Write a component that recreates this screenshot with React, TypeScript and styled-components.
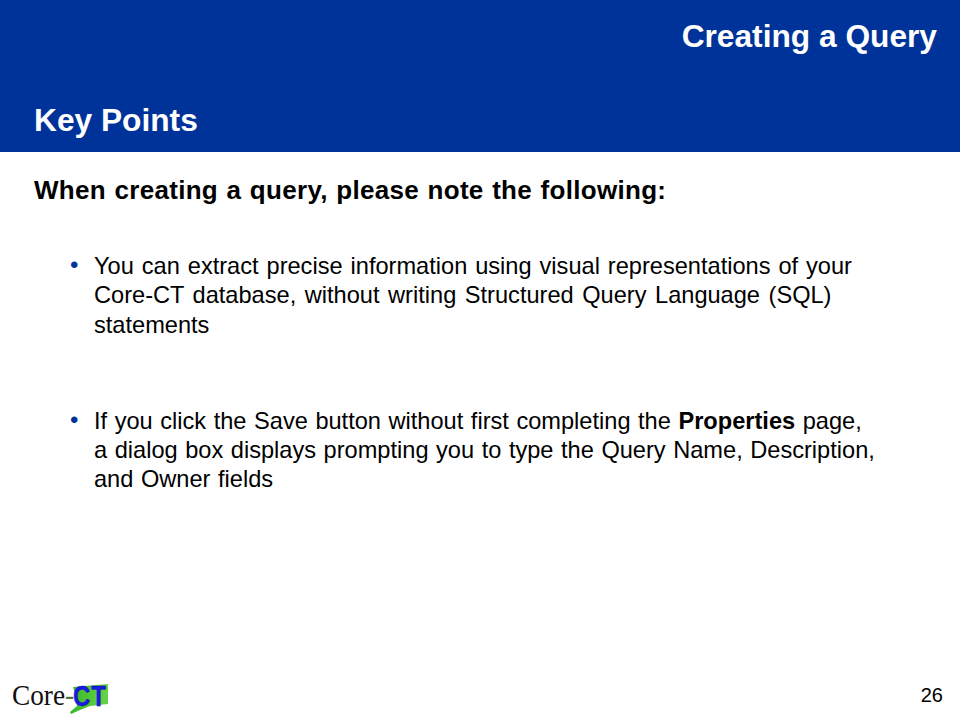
import React from "react";
import styled, { createGlobalStyle } from "styled-components";

const Global = createGlobalStyle`
  html, body { margin: 0; padding: 0; background: #fff; }
  body { font-family: "Liberation Sans", Arial, sans-serif; }
`;
const Slide = styled.div`
  width: 960px; height: 720px; display: flex; flex-direction: column; overflow: hidden; background: #fff; color: #000;
`;
const Banner = styled.header`
  height: 152px; background: #003399; color: #fff; display: flex; flex-direction: column; font-weight: 700; box-sizing: border-box; padding: 18px 23px 14px 34px;
`;
const Chapter = styled.div`
  font-size: 31.7px; line-height: 36px; text-align: right;
`;
const Section = styled.div`
  margin-top: auto; font-size: 31.7px; line-height: 36px;
`;
const Body = styled.main`
  flex: 1; padding: 23px 50px 0 34px; display: flex; flex-direction: column;
`;
const Lead = styled.div`
  font-size: 26px; line-height: 30px; font-weight: 700; letter-spacing: 0.3px; word-spacing: 1px;
`;
const Item = styled.div<{ $gap: number }>`
  margin-top: ${p => p.$gap}px; display: flex; font-size: 23.6px; line-height: 29.3px;
`;
const Dot = styled.span`
  width: 60px; flex: none; padding-left: 36px; box-sizing: border-box; color: #003399; font-size: 24px; line-height: 26px;
`;
const Lines = styled.div`
  display: flex; flex-direction: column;
`;
const Line = styled.span<{ $ws?: number }>`
  white-space: nowrap; word-spacing: ${p => p.$ws ?? 0}px;
`;
const Footer = styled.footer`
  height: 58px; box-sizing: border-box; display: flex; justify-content: space-between; align-items: flex-start; padding: 18px 17px 0 10px;
`;
const Page = styled.span`
  font-size: 20px; line-height: 22px; margin-top: 4px;
`;
const LogoBox = styled.div`
  position: relative; width: 102px; height: 40px;
`;
const LogoArt = styled.svg`
  position: absolute; left: 0; top: 0;
`;
const LogoWord = styled.span`
  position: absolute; left: 2px; top: 0; font-family: "Liberation Serif", "Times New Roman", serif; font-size: 30px; line-height: 30px; color: #111; transform: scaleX(0.91); transform-origin: left top; white-space: nowrap;
`;
const LogoDash = styled.span`
  color: #4f6f45;
`;
const LogoMark = styled.span`
  position: absolute; left: 63px; top: 1px; font-family: "Liberation Sans", Arial, sans-serif; font-weight: 700; font-size: 30px; line-height: 30px; letter-spacing: 1px; color: #1a1ae6; -webkit-text-stroke: 0.4px #0b0b90; transform: scaleX(0.8); transform-origin: left top; white-space: nowrap;
`;
const Logo = () => (
  <LogoBox>
    <LogoArt width="102" height="40" viewBox="0 0 102 40">
      <defs>
        <linearGradient id="logoGreen" x1="0" x2="1" y1="0" y2="0">
          <stop offset="0" stopColor="#38b828" />
          <stop offset="1" stopColor="#68d34a" />
        </linearGradient>
      </defs>
      <path d="M63 7 L98 4 L98 24 L80 26 L70 30 L61 34 L60 32 L67 26 L66 17 Z" fill="url(#logoGreen)" />
    </LogoArt>
    <LogoWord>Core<LogoDash>-</LogoDash></LogoWord>
    <LogoMark>CT</LogoMark>
  </LogoBox>
);
export default function App() {
  return (
    <Slide>
      <Global />
      <Banner>
        <Chapter>Creating a Query</Chapter>
        <Section>Key Points</Section>
      </Banner>
      <Body>
        <Lead>When creating a query, please note the following:</Lead>
        <Item $gap={47}>
          <Dot>•</Dot>
          <Lines>
            <Line $ws={1.4}>You can extract precise information using visual representations of your</Line>
            <Line $ws={2}>Core-CT database, without writing Structured Query Language (SQL)</Line>
            <Line>statements</Line>
          </Lines>
        </Item>
        <Item $gap={67}>
          <Dot>•</Dot>
          <Lines>
            <Line $ws={1}>If you click the Save button without first completing the <b>Properties</b> page,</Line>
            <Line $ws={1}>a dialog box displays prompting you to type the Query Name, Description,</Line>
            <Line $ws={1}>and Owner fields</Line>
          </Lines>
        </Item>
      </Body>
      <Footer>
        <Logo />
        <Page>26</Page>
      </Footer>
    </Slide>
  );
}
